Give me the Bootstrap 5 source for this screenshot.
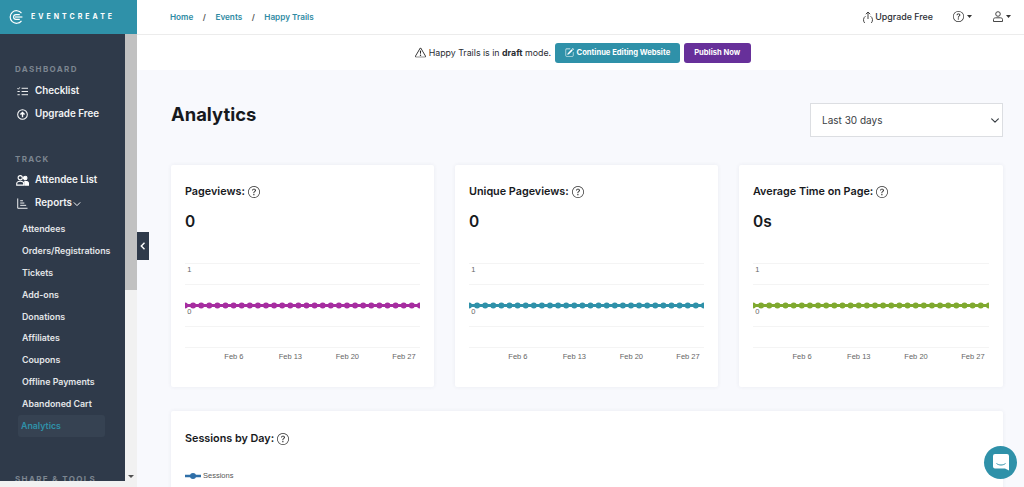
<!DOCTYPE html>
<html lang="en">
<head>
<meta charset="utf-8">
<title>Analytics</title>
<link href="https://cdn.jsdelivr.net/npm/bootstrap@5.3.0/dist/css/bootstrap.min.css" rel="stylesheet">
<style>
html,body{height:100%;overflow:hidden}
body{font-family:Inter,"Noto Sans",sans-serif;background:#f8f9fd;color:#1c1f24}
.ec-shell{height:487px;width:1024px}
.ec-side{width:137px;flex:none;position:relative}
.ec-brand{height:34px;background:#2f91a9;color:#fff;padding-left:9px;gap:8px;flex:none}
.ec-brand span{font-size:7px;font-weight:700;letter-spacing:3px}
.ec-sidebody{flex:1;min-height:0}
.ec-sidenav{width:125px;background:#2f3a4a;padding-top:30px;overflow:hidden;flex:none}
.ec-scroll{width:12px;background:#f1f1f1;flex:none;position:relative}
.ec-thumb{height:256px;background:#c1c1c1;margin-top:0}
.ec-arrow{position:absolute;left:3px;bottom:9px;width:0;height:0;border-left:3px solid transparent;border-right:3px solid transparent;border-top:3px solid #505050}
.ec-hscroll{height:6px;background:#f1f1f1;flex:none;position:absolute;left:0;right:12px;bottom:0;z-index:2}
.ec-label{font-size:8px;font-weight:700;letter-spacing:1.35px;color:#7c8590;padding-left:15px;line-height:10px;height:10px}
.ec-label-track{margin-top:28px}
.ec-label-share{margin-top:37.5px}
.ec-item{display:flex;align-items:center;height:23px;padding-left:17px;font-size:9.8px;font-weight:600;color:#f2f3f4;text-decoration:none;gap:7px}
.ec-item-first{margin-top:5.5px}
.ec-item svg{width:11px;height:11px;flex:none}
.ec-people{width:13px!important;margin-left:-1px;margin-right:-1px}
.ec-chev{width:8px!important;height:6px!important;margin-left:-6px}
.ec-gap{height:3px}
.ec-sub{display:block;height:21.9px;line-height:21.9px;padding-left:22px;font-size:8.8px;font-weight:600;color:#e3e5e8;text-decoration:none;white-space:nowrap}
.ec-sub-active{color:#2f91a9;background:#364252;margin-left:18px;margin-right:20px;padding-left:3px;border-radius:3px}
.ec-top{height:35px;background:#fff;border-bottom:1px solid #ececec;flex:none;padding:0 13px 0 33px}
.ec-top .breadcrumb{font-size:8.2px;font-weight:600;--bs-breadcrumb-item-padding-x:9.5px;--bs-breadcrumb-divider-color:#555}
.ec-top .breadcrumb a{color:#2f8ba3;text-decoration:none}
.ec-top .breadcrumb-item.active{color:#2f8ba3}
.ec-up{font-size:8.9px;font-weight:500;color:#2a2d33;gap:1px}
.ec-help{margin-left:20px;gap:3px;color:#333}
.ec-user{margin-left:21px;gap:3px;margin-right:0}
.ec-banner{height:35px;background:#fff;flex:none;font-size:8.8px;color:#2a2d33;gap:2.5px;padding-left:5px}
.ec-banner svg{width:11px;height:11px}
.ec-btn{font-size:7.6px;font-weight:700;color:#fff;height:20px;padding:0 10px;border:0;border-radius:3px;display:inline-flex;align-items:center;gap:3px}
.ec-btn svg{width:9px;height:9px}
.ec-btn-teal{background:#2f91a9;margin-left:1px}
.ec-btn-purple{background:#67309a;padding:0 10.5px;margin-left:1px}
.ec-main{flex:1;min-height:0;min-width:0;padding:33px 21px 0 34px;overflow:hidden}
.ec-title{font-size:18.4px;font-weight:700;margin:0;color:#17191d;line-height:23px}
.ec-select{width:193px;height:34px;font-size:10px;border-radius:0;border-color:#dcdee2;color:#3a3d42;padding:0 11px;background-size:10px 9px;background-position:right 2px center;box-shadow:none}
.ec-grid{display:grid;grid-template-columns:263px 263px 1fr;gap:21px;margin-top:28px}
.ec-card{border:0;border-radius:2px;background:#fff;box-shadow:0 0 4px rgba(40,50,80,.07);height:222px;padding:0 14px;overflow:hidden}
.ec-cardtitle{font-size:10.8px;font-weight:600;margin:0;padding-top:19px;line-height:15px;display:flex;align-items:center;gap:3px;color:#17191d}
.ec-cardtitle svg{width:12px;height:12px;color:#333}
.ec-value{font-size:15.5px;font-weight:600;margin-top:13px;line-height:20px;color:#17191d}
.ec-chart{display:block;margin-top:26px;width:100%;height:110px}
.ec-chart text{font-family:"Liberation Sans",sans-serif;font-size:7.5px;fill:#666}
.ec-wide{margin-top:24px;height:140px}
.ec-wide .ec-cardtitle{padding-top:20px}
.ec-legend{font-family:"Liberation Sans",sans-serif;font-size:7.5px;color:#555;margin-top:25px;gap:2px;line-height:10px}
.ec-toggle{position:absolute;left:137px;top:232px;width:12px;height:28px;background:#2f3a4a;color:#fff;z-index:3}
.ec-chat{position:absolute;right:7px;bottom:8px;width:33px;height:33px;border-radius:50%;background:#2f91a9;z-index:4}
</style>
</head>
<body>
<svg width="0" height="0" class="position-absolute">
<symbol id="q" viewBox="0 0 16 16"><path fill="currentColor" d="M8 15A7 7 0 1 1 8 1a7 7 0 0 1 0 14zm0 1A8 8 0 1 0 8 0a8 8 0 0 0 0 16z"/><path fill="currentColor" d="M5.255 5.786a.237.237 0 0 0 .241.247h.825c.138 0 .248-.113.266-.25.09-.656.54-1.134 1.342-1.134.686 0 1.314.343 1.314 1.168 0 .635-.374.927-.965 1.371-.673.489-1.206 1.06-1.168 1.987l.003.217a.25.25 0 0 0 .25.246h.811a.25.25 0 0 0 .25-.25v-.105c0-.718.273-.927 1.01-1.486.609-.463 1.244-.977 1.244-2.056 0-1.511-1.276-2.241-2.673-2.241-1.267 0-2.655.59-2.75 2.286zm1.557 5.763c0 .533.425.927 1.01.927.609 0 1.028-.394 1.028-.927 0-.552-.42-.94-1.029-.94-.584 0-1.009.388-1.009.94z"/></symbol>
</svg>
<div class="ec-shell d-flex position-relative overflow-hidden">
  <aside class="ec-side d-flex flex-column">
    <div class="ec-brand d-flex align-items-center">
      <svg width="14" height="14" viewBox="0 0 14 14" fill="none" stroke="#fff" stroke-width="1.2"><path d="M12.5 3.2A6.3 6.3 0 1 0 12.5 10.8"/><path d="M10.8 4.6H7A2.4 2.4 0 0 0 7 9.4H10.8"/><path d="M6 7H13.4"/></svg>
      <span>EVENTCREATE</span>
    </div>
    <div class="ec-sidebody d-flex">
      <nav class="ec-sidenav">
        <div class="ec-label">DASHBOARD</div>
        <a class="ec-item ec-item-first" href="#"><svg viewBox="0 0 12 12" fill="none" stroke="#fff" stroke-width="1"><path d="M5 2.5H12M5 6H12M5 9.500H12M.5 2.500l1 1L3 1.500M.5 6H3M.5 9.500H3"/></svg>Checklist</a>
        <a class="ec-item" href="#"><svg viewBox="0 0 16 16" fill="none" stroke="#fff" stroke-width="1.500"><circle cx="8" cy="8" r="7"/><path d="M8 12V5M5 8l3-3 3 3" stroke-width="2"/></svg>Upgrade Free</a>
        <div class="ec-label ec-label-track">TRACK</div>
        <a class="ec-item ec-item-first" href="#"><svg class="ec-people" viewBox="0 0 14 12" fill="none" stroke="#fff" stroke-width="1.200"><circle cx="4.500" cy="3" r="2.300"/><circle cx="10" cy="3.200" r="1.900" fill="#fff"/><path d="M.7 11V9.200C.7 7.800 2 6.800 4.500 6.800S8.300 7.800 8.300 9.200V11Z"/><path d="M9.500 11H13.500V9C13.500 7.500 12 6.800 9.500 6.800Z" fill="#fff"/></svg>Attendee List</a>
        <a class="ec-item" href="#"><svg viewBox="0 0 12 12" fill="none" stroke="#fff" stroke-width="1"><path d="M.8 .5V11.200H11.500M3.500 3H6.500M3.500 5.500H8M3.500 8H10"/></svg>Reports <svg class="ec-chev" viewBox="0 0 10 6" fill="none" stroke="#fff" stroke-width="1.200"><path d="M1 1l4 4 4-4"/></svg></a>
        <div class="ec-gap"></div>
        <a class="ec-sub" href="#">Attendees</a>
        <a class="ec-sub" href="#">Orders/Registrations</a>
        <a class="ec-sub" href="#">Tickets</a>
        <a class="ec-sub" href="#">Add-ons</a>
        <a class="ec-sub" href="#">Donations</a>
        <a class="ec-sub" href="#">Affiliates</a>
        <a class="ec-sub" href="#">Coupons</a>
        <a class="ec-sub" href="#">Offline Payments</a>
        <a class="ec-sub" href="#">Abandoned Cart</a>
        <a class="ec-sub ec-sub-active" href="#">Analytics</a>
        <div class="ec-label ec-label-share">SHARE &amp; TOOLS</div>
      </nav>
      <div class="ec-scroll"><div class="ec-thumb"></div><div class="ec-arrow"></div></div>
    </div>
    <div class="ec-hscroll"></div>
  </aside>
  <div class="flex-grow-1 d-flex flex-column" style="min-width:0">
    <header class="ec-top d-flex align-items-center justify-content-between">
      <ol class="breadcrumb mb-0">
        <li class="breadcrumb-item"><a href="#">Home</a></li>
        <li class="breadcrumb-item"><a href="#">Events</a></li>
        <li class="breadcrumb-item active">Happy Trails</li>
      </ol>
      <div class="d-flex align-items-center">
        <span class="ec-up d-flex align-items-center"><svg width="12" height="12" viewBox="0 0 12 12" fill="none" stroke="#333" stroke-width=".9"><path d="M6 8V1M3.800 3.200 6 1l2.200 2.200M3.500 5.200A4.500 4.500 0 1 0 8.500 5.200"/></svg>Upgrade Free</span>
        <span class="ec-help d-flex align-items-center"><svg width="11" height="11"><use href="#q"/></svg><svg width="5" height="3" viewBox="0 0 5 3"><path d="M0 0h5L2.500 3z" fill="#333"/></svg></span>
        <span class="ec-user d-flex align-items-center"><svg width="10" height="11" viewBox="0 0 10 11" fill="none" stroke="#333" stroke-width=".9"><circle cx="5" cy="3" r="2.300"/><path d="M.5 10.500V8.500C.5 7.300 1.500 6.800 2.500 6.800H7.500C8.500 6.800 9.500 7.300 9.500 8.500V10.500Z"/></svg><svg width="5" height="3" viewBox="0 0 5 3"><path d="M0 0h5L2.500 3z" fill="#333"/></svg></span>
      </div>
    </header>
    <div class="ec-banner d-flex align-items-center justify-content-center">
      <svg viewBox="0 0 16 16" fill="#222"><path d="M7.938 2.016A.13.13 0 0 1 8.002 2a.13.13 0 0 1 .063.016.146.146 0 0 1 .054.057l6.857 11.667c.036.06.035.124.002.183a.163.163 0 0 1-.054.06.116.116 0 0 1-.066.017H1.146a.115.115 0 0 1-.066-.017.163.163 0 0 1-.054-.06.176.176 0 0 1 .002-.183L7.884 2.073a.147.147 0 0 1 .054-.057zm1.044-.45a1.13 1.13 0 0 0-1.96 0L.165 13.233c-.457.778.091 1.767.98 1.767h13.713c.889 0 1.438-.99.98-1.767L8.982 1.566z"/><path d="M7.002 12a1 1 0 1 1 2 0 1 1 0 0 1-2 0zM7.100 5.995a.905.905 0 1 1 1.800 0l-.350 3.507a.552.552 0 0 1-1.100 0L7.100 5.995z"/></svg>
      <span>Happy Trails is in <b>draft</b> mode.</span>
      <button class="btn ec-btn ec-btn-teal" type="button"><svg viewBox="0 0 16 16" fill="#fff"><path d="M15.502 1.940a.5.5 0 0 1 0 .706L14.459 3.690l-2-2L13.502.646a.5.5 0 0 1 .707 0l1.293 1.293zm-1.750 2.456-2-2L4.939 9.210a.5.5 0 0 0-.121.196l-.805 2.414a.25.25 0 0 0 .316.316l2.414-.805a.5.5 0 0 0 .196-.120l6.813-6.814z"/><path d="M1 13.500A1.500 1.500 0 0 0 2.500 15h11a1.500 1.500 0 0 0 1.500-1.500v-6a.5.5 0 0 0-1 0v6a.5.5 0 0 1-.5.5h-11a.5.5 0 0 1-.5-.5v-11a.5.5 0 0 1 .5-.5H9a.5.5 0 0 0 0-1H2.500A1.500 1.500 0 0 0 1 2.500v11z"/></svg>Continue Editing Website</button>
      <button class="btn ec-btn ec-btn-purple" type="button">Publish Now</button>
    </div>
    <main class="ec-main">
      <div class="d-flex justify-content-between align-items-start">
        <h1 class="ec-title">Analytics</h1>
        <select class="form-select ec-select"><option>Last 30 days</option></select>
      </div>
      <div class="ec-grid">
        <section class="card ec-card">
          <h2 class="ec-cardtitle">Pageviews: <svg><use href="#q"/></svg></h2>
          <div class="ec-value">0</div>
          <svg class="ec-chart" viewBox="0 0 235 110" preserveAspectRatio="none"><g stroke="#f4f4f4"><path d="M0 5.500H235M0 26.500H235M0 68.500H235M0 89.500H235"/></g><text x="2.300" y="14.300">1</text><text x="2.300" y="56.300">0</text><path d="M0 47.500H235" stroke="#a62da0" stroke-width="3"/><path d="M0 47.500H235" stroke="#a62da0" stroke-width="6" stroke-linecap="round" stroke-dasharray="0 8.100"/><text x="39.300" y="101">Feb 6</text><text x="93.700" y="101">Feb 13</text><text x="150.700" y="101">Feb 20</text><text x="207.300" y="101">Feb 27</text></svg>
        </section>
        <section class="card ec-card">
          <h2 class="ec-cardtitle">Unique Pageviews: <svg><use href="#q"/></svg></h2>
          <div class="ec-value">0</div>
          <svg class="ec-chart" viewBox="0 0 235 110" preserveAspectRatio="none"><g stroke="#f4f4f4"><path d="M0 5.500H235M0 26.500H235M0 68.500H235M0 89.500H235"/></g><text x="2.300" y="14.300">1</text><text x="2.300" y="56.300">0</text><path d="M0 47.500H235" stroke="#2f91a9" stroke-width="3"/><path d="M0 47.500H235" stroke="#2f91a9" stroke-width="6" stroke-linecap="round" stroke-dasharray="0 8.100"/><text x="39.300" y="101">Feb 6</text><text x="93.700" y="101">Feb 13</text><text x="150.700" y="101">Feb 20</text><text x="207.300" y="101">Feb 27</text></svg>
        </section>
        <section class="card ec-card">
          <h2 class="ec-cardtitle">Average Time on Page: <svg><use href="#q"/></svg></h2>
          <div class="ec-value">0s</div>
          <svg class="ec-chart" viewBox="0 0 235 110" preserveAspectRatio="none"><g stroke="#f4f4f4"><path d="M0 5.500H235M0 26.500H235M0 68.500H235M0 89.500H235"/></g><text x="2.300" y="14.300">1</text><text x="2.300" y="56.300">0</text><path d="M0 47.500H235" stroke="#7fa92f" stroke-width="3"/><path d="M0 47.500H235" stroke="#7fa92f" stroke-width="6" stroke-linecap="round" stroke-dasharray="0 8.100"/><text x="39.300" y="101">Feb 6</text><text x="93.700" y="101">Feb 13</text><text x="150.700" y="101">Feb 20</text><text x="207.300" y="101">Feb 27</text></svg>
        </section>
      </div>
      <section class="card ec-card ec-wide">
        <h2 class="ec-cardtitle">Sessions by Day: <svg><use href="#q"/></svg></h2>
        <div class="ec-legend d-flex align-items-center"><svg width="16" height="6" viewBox="0 0 16 6"><path d="M0 3H16" stroke="#2f6fa8" stroke-width="2.500"/><circle cx="8" cy="3" r="3" fill="#2f6fa8"/></svg>Sessions</div>
      </section>
    </main>
  </div>
  <div class="ec-toggle d-flex align-items-center justify-content-center"><svg width="6" height="8" viewBox="0 0 6 8" fill="none" stroke="#fff" stroke-width="1.400"><path d="M4.500 .8 1.300 4l3.200 3.200"/></svg></div>
  <div class="ec-chat d-flex align-items-center justify-content-center"><svg width="16" height="17" viewBox="0 0 16 17"><path d="M2 0H14A2 2 0 0 1 16 2V16.500L12 14.500H2A2 2 0 0 1 0 12.500V2A2 2 0 0 1 2 0Z" fill="#fff"/><path d="M3.500 9.500C6 11.500 10 11.500 12.500 9.500" fill="none" stroke="#2f91a9" stroke-width="1"/></svg></div>
</div>
<script src="https://cdn.jsdelivr.net/npm/bootstrap@5.3.0/dist/js/bootstrap.bundle.min.js"></script>
</body>
</html>
